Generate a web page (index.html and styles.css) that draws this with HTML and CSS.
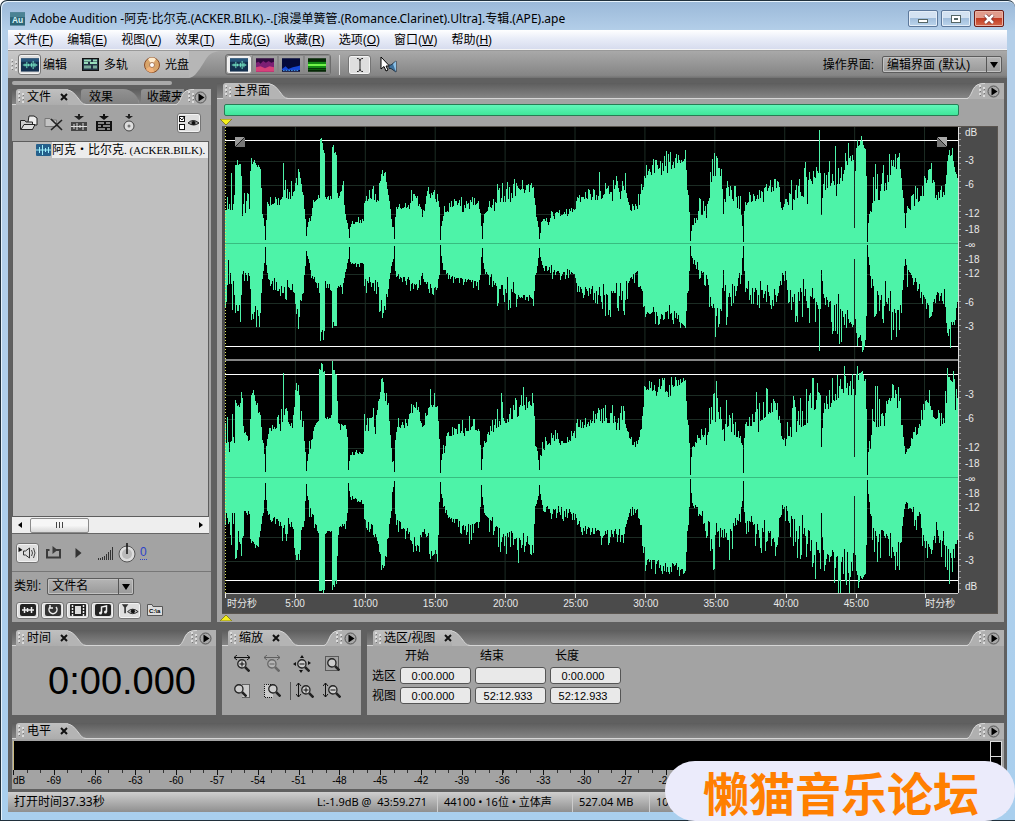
FILE: index.html
```html
<!DOCTYPE html>
<html lang="zh-CN">
<head>
    <meta charset="UTF-8">
    <meta name="viewport" content="width=device-width, initial-scale=1.0">
    <title>Adobe Audition</title>
    <link rel="stylesheet" href="styles.css">
</head>
<body>
    <!-- shared icon shapes -->
    <svg class="symbols" aria-hidden="true">
        <symbol id="slope-right" viewBox="0 0 24 16"><path d="M0 0C10 0 12 4 16 9C19 13 20 15 24 16H0Z" fill="#b4b4b4"/><path d="M0 .5C10 .5 12 4 16 9C19 13 20 15 24 15.5" fill="none" stroke="#d6d6d6"/></symbol>
        <symbol id="slope-left" viewBox="0 0 18 16"><path d="M18 0C9 0 7 4 5 9C3 13 2 15 0 16H18Z" fill="#b0b0b0"/><path d="M18 .5C9 .5 7 4 5 9C3 13 2 15 0 15.5" fill="none" stroke="#dadada"/></symbol>
        <symbol id="grip" viewBox="0 0 6 12"><path d="M0 1h2M0 5h2M0 9h2M4 3h2M4 7h2M4 11h2" stroke="#dcdcdc" stroke-width="2"/><path d="M1 2.500h1M1 6.500h1M1 10.500h1M5 4.500h1M5 8.500h1" stroke="#777"/></symbol>
        <symbol id="panel-arrow" viewBox="0 0 13 13"><circle cx="6.500" cy="6.500" r="5.500" fill="#a8a8a8" stroke="#555"/><path d="M4.500 2.500L10.500 6.500L4.500 10.500Z" fill="#000"/></symbol>
        <symbol id="close-x" viewBox="0 0 8 8"><path d="M1 1L7 7M7 1L1 7" stroke="#111" stroke-width="2"/></symbol>
        <symbol id="wave" viewBox="0 0 20 15"><rect width="20" height="15" fill="#14304f"/><path d="M0 0H20V4H0Z" fill="#27557b"/><path d="M2 7.500H18M4.500 6V9M6.500 4V11M8.500 6V9M11.500 5V10M13.500 3V12M15.500 5V10M17.500 7V8" stroke="#7df5cf"/></symbol>
        <symbol id="lens" viewBox="0 0 12 12"><circle cx="4.500" cy="4.500" r="3.800" fill="#ccc" stroke="#222" stroke-width="1.200"/><path d="M7.500 7.500L11.500 11.500" stroke="#222" stroke-width="2.400"/></symbol>
    </svg>

    <div class="window">
        <header class="titlebar">
            <svg class="app-icon" viewBox="0 0 16 14"><rect width="16" height="14" fill="#2d6577"/><rect x="0" y="0" width="16" height="5" fill="#4b8394"/><text x="2" y="11" class="app-letters">Au</text></svg>
            <h1>Adobe Audition -阿克·比尔克.(ACKER.BILK).-.[浪漫单簧管.(Romance.Clarinet).Ultra].专辑.(APE).ape</h1>
            <div class="window-buttons">
                <button class="win-btn" aria-label="最小化"><svg viewBox="0 0 12 10"><rect x="1.500" y="5.500" width="9" height="3" fill="#fff" stroke="#566"/></svg></button>
                <button class="win-btn" aria-label="最大化"><svg viewBox="0 0 12 10"><rect x="1.500" y="1.500" width="9" height="7" fill="#fff" stroke="#566"/><rect x="4.500" y="4.500" width="3" height="1" fill="#9bc" stroke="#566"/></svg></button>
                <button class="win-btn win-close" aria-label="关闭"><svg viewBox="0 0 12 10"><path d="M2 1L10 9M10 1L2 9" stroke="#733" stroke-width="4"/><path d="M2 1L10 9M10 1L2 9" stroke="#fff" stroke-width="2.500"/></svg></button>
            </div>
        </header>

        <nav class="menubar">
            <button>文件(<u>F</u>)</button>
            <button>编辑(<u>E</u>)</button>
            <button>视图(<u>V</u>)</button>
            <button>效果(<u>T</u>)</button>
            <button>生成(<u>G</u>)</button>
            <button>收藏(<u>R</u>)</button>
            <button>选项(<u>O</u>)</button>
            <button>窗口(<u>W</u>)</button>
            <button>帮助(<u>H</u>)</button>
        </nav>

        <div class="toolbar">
            <div class="modes">
                <svg class="grip" viewBox="0 0 6 12"><use href="#grip"/></svg>
                <button class="mode"><span class="mode-icon pressed"><svg class="wave-icon" viewBox="0 0 20 15"><use href="#wave"/></svg></span>编辑</button>
                <button class="mode"><span class="mode-icon"><svg class="track-icon" viewBox="0 0 17 13"><rect x=".5" y=".5" width="16" height="12" fill="#234" stroke="#111"/><path d="M2 2.500H9M11 2.500H15M2 5H6M8 5H15" stroke="#9db" stroke-width="2"/><path d="M2 9H9M11 9H15" stroke="#7a9" stroke-width="3"/></svg></span>多轨</button>
                <button class="mode"><span class="mode-icon"><svg class="disc-icon" viewBox="0 0 16 16"><circle cx="8" cy="8" r="7.500" fill="#d9a56b" stroke="#8a4d28"/><path d="M8 8L4 2A7 7 0 0 1 12 2Z" fill="#ffeccd"/><path d="M8 8L2 12A7 7 0 0 0 10 15Z" fill="#f1b279"/><circle cx="8" cy="8" r="2.500" fill="#fff" stroke="#a75"/></svg></span>光盘</button>
            </div>
            <svg class="modes-edge" viewBox="0 0 32 27" preserveAspectRatio="none"><path d="M0 0H32C18 1 18 8 12 16C8 22 5 26 0 27Z" fill="#b6b6b6"/></svg>
            <div class="views">
                <button class="pressed" aria-label="波形"><svg class="wave-icon" viewBox="0 0 20 15"><use href="#wave"/></svg></button>
                <button aria-label="频谱"><svg class="wave-icon" viewBox="0 0 20 15"><rect width="20" height="15" fill="#30093f"/><path d="M0 15V5L3 4L5 6L8 3L11 5L14 3L17 5L20 4V15Z" fill="#7d1f74"/><path d="M0 10L5 9L10 11L15 9L20 10V15H0Z" fill="#d8427a"/></svg></button>
                <button aria-label="声像"><svg class="wave-icon" viewBox="0 0 20 15"><rect width="20" height="15" fill="#040a3c"/><path d="M0 12L4 9L7 12L12 10L17 9L20 8V13H0Z" fill="#1648d8"/><path d="M1 13.500H19" stroke="#4ca5ff" stroke-dasharray="2 1"/></svg></button>
                <button aria-label="相位"><svg class="wave-icon" viewBox="0 0 20 15"><rect width="20" height="15" fill="#052805"/><path d="M0 4H20V11H0Z" fill="#128a14"/><path d="M0 7.500H20" stroke="#7dff4f" stroke-width="2"/><path d="M0 12.500H20" stroke="#0d5f10"/></svg></button>
            </div>
            <div class="tools">
                <button class="pressed" aria-label="时间选择工具"><svg class="tool-icon" viewBox="0 0 14 16"><path d="M4 1.500C6 1.500 7 2 7 4V12C7 14 6 14.500 4 14.500M10 1.500C8 1.500 7 2 7 4M7 12C7 14 8 14.500 10 14.500" fill="none" stroke="#222"/></svg></button>
                <button aria-label="拖动工具"><svg class="scrub-icon" viewBox="0 0 18 16"><path d="M1 0V12L4 9.500L6 14L8 13L6 9H9.500Z" fill="#fff" stroke="#000"/><path d="M9 8H11L16 4V15L11 11.500H9Z" fill="#3e719b" stroke="#234"/><path d="M13 7L16 4V15Z" fill="#8dc1e6"/></svg></button>
            </div>
            <div class="workspace-picker">
                <label for="workspace">操作界面:</label>
                <span class="combo"><select id="workspace"><option>编辑界面 (默认)</option></select></span>
            </div>
        </div>

        <main class="workspace">
            <div class="row upper">
                <section class="panel files">
                    <div class="rail"></div>
                    <div class="tabs">
                        <button class="tab"><svg class="grip" viewBox="0 0 6 12"><use href="#grip"/></svg>文件<svg class="close" viewBox="0 0 8 8"><use href="#close-x"/></svg></button>
                        <svg class="slope" viewBox="0 0 24 16"><use href="#slope-right"/></svg>
                        <button class="tab dim">效果</button>
                        <button class="tab dim cut">收藏夹</button>
                        <div class="corner">
                            <svg class="slope-left" viewBox="0 0 18 16"><use href="#slope-left"/></svg>
                            <svg class="grip" viewBox="0 0 6 12"><use href="#grip"/></svg>
                            <button aria-label="面板菜单"><svg class="arrow" viewBox="0 0 13 13"><use href="#panel-arrow"/></svg></button>
                        </div>
                    </div>
                    <div class="panel-body">
                        <div class="file-tools">
                            <button aria-label="导入"><svg viewBox="0 0 20 18"><path d="M9 8L10 2H15L18 4V11H12Z" fill="#eee" stroke="#222"/><path d="M1.500 15.500V6.500H6L7 8H13.500V15.500Z" fill="#ccc" stroke="#222"/><path d="M2 15.500L5 10.500H16L13.500 15.500Z" fill="#ddd" stroke="#222"/></svg></button>
                            <button aria-label="关闭文件"><svg viewBox="0 0 20 18"><path d="M1 12.500V4.500H6L7 6H12.500V12.500Z" fill="#c4c4c4" stroke="#777"/><path d="M7 5L18 16M18 6L7 16" stroke="#222" stroke-width="1.600"/></svg></button>
                            <button aria-label="插入多轨"><svg viewBox="0 0 20 18"><path d="M9 0H11V2H15L10 6L5 2H9Z" fill="#222"/><rect x="2" y="8" width="16" height="9" fill="#444"/><path d="M2 12.500H18M5 10V15M8 9V16M11 11V14M14 9V16" stroke="#ddd"/></svg></button>
                            <button aria-label="编辑文件"><svg viewBox="0 0 20 18"><path d="M9 0H11V2H15L10 6L5 2H9Z" fill="#111"/><rect x="2" y="7" width="16" height="10" fill="#111"/><path d="M4 9H10M12 9H16M4 12H7M9 12H16M4 15H11M13 15H16" stroke="#aaa" stroke-width="1.500"/></svg></button>
                            <button aria-label="插入光盘"><svg viewBox="0 0 20 18"><path d="M9 0H11V2H14L10 5L6 2H9Z" fill="#222"/><circle cx="10" cy="12" r="5" fill="#ddd" stroke="#444"/><circle cx="10" cy="12" r="1.500" fill="#777"/></svg></button>
                            <button class="pressed options" aria-label="显示选项"><svg class="options-icon" viewBox="0 0 22 16"><rect x="1.500" y="1.500" width="5" height="5" fill="#fff" stroke="#111"/><path d="M2 3L4 5L7 1" fill="none" stroke="#111"/><rect x="1.500" y="9.500" width="5" height="5" fill="#fff" stroke="#111"/><path d="M10 8Q15 3 21 8Q16 12 10 8Z" fill="#999" stroke="#222"/><circle cx="15.500" cy="8" r="2" fill="#111"/></svg></button>
                        </div>
                        <div class="file-list">
                            <div class="file-row"><svg class="file-icon" viewBox="0 0 15 12"><rect width="15" height="12" rx="1" fill="#25608c"/><path d="M0 6H15M3.500 3V9M6.500 1V11M9.500 4V8M12.500 3V9" stroke="#9ceefa"/></svg><span class="file-name">阿克・比尔克<span class="latin">. (ACKER.BILK).</span></span></div>
                        </div>
                        <div class="hscroll">
                            <button aria-label="向左"><svg viewBox="0 0 8 8"><path d="M6 1L2 4L6 7Z"/></svg></button>
                            <span class="thumb"><i></i><i></i><i></i></span>
                            <button aria-label="向右"><svg viewBox="0 0 8 8"><path d="M2 1L6 4L2 7Z"/></svg></button>
                        </div>
                        <div class="preview">
                            <button class="pressed" aria-label="自动播放"><svg viewBox="0 0 20 16"><path d="M1 2L5 5L1 7Z" fill="#111"/><path d="M6 6H8L12 3V13L8 10H6Z" fill="#ddd" stroke="#333"/><path d="M14 5Q16 8 14 11M16 3Q19 8 16 13" fill="none" stroke="#444"/></svg></button>
                            <button aria-label="循环"><svg viewBox="0 0 20 16"><path d="M6 5H3.500V12.500H16.500V5H10" fill="none" stroke="#3b3b3b" stroke-width="2"/><path d="M9 1L14 5L9 9Z" fill="#3b3b3b"/></svg></button>
                            <button aria-label="播放"><svg viewBox="0 0 20 16"><path d="M7 3L13 8L7 13Z" fill="#333"/></svg></button>
                            <svg class="volume-bars" viewBox="0 0 16 14"><path d="M.5 12V14M2.500 12V14M4.500 11V14M6.500 10V14M8.500 8V14M10.500 6V14M12.500 4V14M14.500 1V14" stroke="#333"/></svg>
                            <svg class="knob" viewBox="0 0 18 20"><circle cx="9" cy="11" r="8" fill="#ddd" stroke="#555"/><circle cx="9" cy="11" r="5" fill="#bbb"/><path d="M9 0V11" stroke="#111" stroke-width="1.500"/></svg>
                            <a href="#volume" id="volume">0</a>
                        </div>
                        <div class="category">
                            <label for="category">类别:</label>
                            <span class="combo"><select id="category"><option>文件名</option></select></span>
                        </div>
                        <div class="filters">
                            <button class="pressed" aria-label="音频文件"><svg viewBox="0 0 18 14"><rect x="1" y="1" width="16" height="12" rx="2" fill="#222"/><path d="M3 7H15M5.500 4V10M8.500 5V9M12.500 4V10" stroke="#eee" stroke-width="1.500"/></svg></button>
                            <button class="pressed" aria-label="循环文件"><svg viewBox="0 0 18 14"><rect x="1" y="1" width="16" height="12" rx="2" fill="#333"/><path d="M6 4A4 4 0 1 0 12 4M6 2V5H9" fill="none" stroke="#eee" stroke-width="1.500"/></svg></button>
                            <button class="pressed" aria-label="视频文件"><svg viewBox="0 0 18 14"><rect x="1" y="1" width="16" height="12" rx="1" fill="#222"/><rect x="6" y="3" width="6" height="8" fill="#ddd"/><path d="M3.500 2V13M14.500 2V13" stroke="#eee" stroke-width="1.500" stroke-dasharray="2 1"/></svg></button>
                            <button class="pressed" aria-label="MIDI 文件"><svg viewBox="0 0 18 14"><rect x="1" y="1" width="16" height="12" rx="2" fill="#222"/><path d="M7.500 10V4L12.500 3V9" fill="none" stroke="#eee" stroke-width="1.500"/><circle cx="6.500" cy="10" r="1.500" fill="#eee"/><circle cx="11.500" cy="9" r="1.500" fill="#eee"/></svg></button>
                            <button class="pressed eye" aria-label="标记"><svg viewBox="0 0 22 16"><path d="M1 1H9L6 5V12H4V5Z" fill="#333"/><path d="M8 10Q14 4 21 10Q14 15 8 10Z" fill="#bbb" stroke="#111"/><circle cx="14.500" cy="9.500" r="2.500" fill="#111"/></svg></button>
                            <button aria-label="完整路径"><svg viewBox="0 0 18 14"><path d="M1.500 12.500V1.500H6L7 3.500H16.500V12.500Z" fill="#ddd" stroke="#555"/><text x="3" y="10" class="tiny">C:\a</text></svg></button>
                        </div>
                    </div>
                </section>

                <section class="panel main-view">
                    <div class="tabs">
                        <button class="tab"><svg class="grip" viewBox="0 0 6 12"><use href="#grip"/></svg>主界面</button>
                        <svg class="slope" viewBox="0 0 24 16"><use href="#slope-right"/></svg>
                        <div class="corner">
                            <svg class="slope-left" viewBox="0 0 18 16"><use href="#slope-left"/></svg>
                            <svg class="grip" viewBox="0 0 6 12"><use href="#grip"/></svg>
                            <button aria-label="面板菜单"><svg class="arrow" viewBox="0 0 13 13"><use href="#panel-arrow"/></svg></button>
                        </div>
                    </div>
                    <div class="panel-body">
                        <div class="range-bar"></div>
                        <svg class="marker" viewBox="0 0 12 7"><path d="M0 0H12L6 6Z" fill="#f5ef1c" stroke="#8a8420"/></svg>
                        <div class="display">
                            <div class="wave-area">
                                <div class="channel" id="left"></div>
                                <div class="channel" id="right"></div>
                                <span class="fade fade-in"></span>
                                <span class="fade fade-out"></span>
                            </div>
                            <div class="db-scale">
                                <ol class="db-rows"><li>dB</li><li>-3</li><li>-6</li><li>-12</li><li>-18</li><li>-∞</li><li>-18</li><li>-12</li><li>-6</li><li>-3</li></ol>
                                <ol class="db-rows lower"><li></li><li>-3</li><li>-6</li><li>-12</li><li>-18</li><li>-∞</li><li>-18</li><li>-12</li><li>-6</li><li>-3</li><li>dB</li></ol>
                            </div>
                            <ol class="time-ruler">
                                <li class="unit">时分秒</li><li>5:00</li><li>10:00</li><li>15:00</li><li>20:00</li><li>25:00</li><li>30:00</li><li>35:00</li><li>40:00</li><li>45:00</li><li class="unit end">时分秒</li>
                            </ol>
                        </div>
                        <svg class="marker" viewBox="0 0 12 7"><path d="M0 7H12L6 1Z" fill="#f5ef1c" stroke="#8a8420"/></svg>
                    </div>
                </section>
            </div>

            <div class="row lower-row">
                <section class="panel time">
                    <div class="tabs">
                        <button class="tab"><svg class="grip" viewBox="0 0 6 12"><use href="#grip"/></svg>时间<svg class="close" viewBox="0 0 8 8"><use href="#close-x"/></svg></button>
                        <svg class="slope" viewBox="0 0 24 16"><use href="#slope-right"/></svg>
                        <div class="corner">
                            <svg class="slope-left" viewBox="0 0 18 16"><use href="#slope-left"/></svg>
                            <svg class="grip" viewBox="0 0 6 12"><use href="#grip"/></svg>
                            <button aria-label="面板菜单"><svg class="arrow" viewBox="0 0 13 13"><use href="#panel-arrow"/></svg></button>
                        </div>
                    </div>
                    <div class="panel-body"><output>0:00.000</output></div>
                </section>

                <section class="panel zoom">
                    <div class="tabs">
                        <button class="tab"><svg class="grip" viewBox="0 0 6 12"><use href="#grip"/></svg>缩放<svg class="close" viewBox="0 0 8 8"><use href="#close-x"/></svg></button>
                        <svg class="slope" viewBox="0 0 24 16"><use href="#slope-right"/></svg>
                        <div class="corner">
                            <svg class="slope-left" viewBox="0 0 18 16"><use href="#slope-left"/></svg>
                            <svg class="grip" viewBox="0 0 6 12"><use href="#grip"/></svg>
                            <button aria-label="面板菜单"><svg class="arrow" viewBox="0 0 13 13"><use href="#panel-arrow"/></svg></button>
                        </div>
                    </div>
                    <div class="panel-body">
                        <button aria-label="水平放大"><svg viewBox="0 0 18 18"><path d="M1 2.500H17M4 0L1 2.500L4 5M14 0L17 2.500L14 5" fill="none" stroke="#111"/><use href="#lens" x="4" y="4" width="13" height="13"/><path d="M6.500 9H11.500M9 6.500V11.500" stroke="#111"/></svg></button>
                        <button class="off" aria-label="水平缩小"><svg viewBox="0 0 18 18"><path d="M1 2.500H17M4 0L1 2.500L4 5M14 0L17 2.500L14 5" fill="none" stroke="#111"/><use href="#lens" x="4" y="4" width="13" height="13"/><path d="M6.500 9H11.500" stroke="#111"/></svg></button>
                        <button aria-label="全部缩小"><svg viewBox="0 0 18 18"><use href="#lens" x="4" y="4" width="13" height="13"/><path d="M6.500 9H11.500" stroke="#111"/><path d="M9 0L11 3H7ZM0 9L3 7V11ZM18 8L15 6V10ZM8 18L6 15H10Z" fill="#111"/></svg></button>
                        <button aria-label="缩放到选区"><svg viewBox="0 0 18 18"><rect x="2.500" y="1.500" width="13" height="14" fill="none" stroke="#111" stroke-dasharray="1 1"/><use href="#lens" x="4" y="3" width="13" height="13"/></svg></button>
                        <button aria-label="缩放到左边缘"><svg viewBox="0 0 18 18"><path d="M9.500 2.500H16.500V15.500H9.500" fill="#ccc" stroke="#111" stroke-dasharray="1 1"/><use href="#lens" x="1" y="2" width="13" height="13"/></svg></button>
                        <button aria-label="缩放到右边缘"><svg viewBox="0 0 18 18"><path d="M10 2.500H1.500V15.500H10" fill="#ccc" stroke="#111" stroke-dasharray="1 1"/><use href="#lens" x="5" y="2" width="13" height="13"/></svg></button>
                        <button class="divided" aria-label="垂直放大"><svg viewBox="0 0 18 18"><path d="M2.500 1V15M0 4L2.500 1L5 4M0 12L2.500 15L5 12" fill="none" stroke="#111"/><use href="#lens" x="5" y="3" width="13" height="13"/><path d="M7.500 8H12.500M10 5.500V10.500" stroke="#111"/></svg></button>
                        <button aria-label="垂直缩小"><svg viewBox="0 0 18 18"><path d="M2.500 1V15M0 4L2.500 1L5 4M0 12L2.500 15L5 12" fill="none" stroke="#111"/><use href="#lens" x="5" y="3" width="13" height="13"/><path d="M7.500 8H12.500" stroke="#111"/></svg></button>
                    </div>
                </section>

                <section class="panel selection">
                    <div class="tabs">
                        <button class="tab"><svg class="grip" viewBox="0 0 6 12"><use href="#grip"/></svg>选区/视图<svg class="close" viewBox="0 0 8 8"><use href="#close-x"/></svg></button>
                        <svg class="slope" viewBox="0 0 24 16"><use href="#slope-right"/></svg>
                        <div class="corner">
                            <svg class="slope-left" viewBox="0 0 18 16"><use href="#slope-left"/></svg>
                            <svg class="grip" viewBox="0 0 6 12"><use href="#grip"/></svg>
                            <button aria-label="面板菜单"><svg class="arrow" viewBox="0 0 13 13"><use href="#panel-arrow"/></svg></button>
                        </div>
                    </div>
                    <div class="panel-body">
                        <span></span><span class="col" id="c1">开始</span><span class="col" id="c2">结束</span><span class="col" id="c3">长度</span>
                        <span id="r1">选区</span><input aria-labelledby="r1 c1" value="0:00.000"><input aria-labelledby="r1 c2" value=""><input aria-labelledby="r1 c3" value="0:00.000">
                        <span id="r2">视图</span><input aria-labelledby="r2 c1" value="0:00.000"><input aria-labelledby="r2 c2" value="52:12.933"><input aria-labelledby="r2 c3" value="52:12.933">
                    </div>
                </section>
            </div>

            <section class="panel levels">
                <div class="tabs">
                    <button class="tab"><svg class="grip" viewBox="0 0 6 12"><use href="#grip"/></svg>电平<svg class="close" viewBox="0 0 8 8"><use href="#close-x"/></svg></button>
                    <svg class="slope" viewBox="0 0 24 16"><use href="#slope-right"/></svg>
                    <div class="corner">
                        <svg class="slope-left" viewBox="0 0 18 16"><use href="#slope-left"/></svg>
                        <svg class="grip" viewBox="0 0 6 12"><use href="#grip"/></svg>
                        <button aria-label="面板菜单"><svg class="arrow" viewBox="0 0 13 13"><use href="#panel-arrow"/></svg></button>
                    </div>
                </div>
                <div class="panel-body">
                    <div class="meter"><span class="clip"></span></div>
                    <ol class="meter-scale" id="meterScale"></ol>
                </div>
            </section>
        </main>

        <footer class="statusbar">
            <span class="message">打开时间37.33秒</span>
            <span class="stat peak">L:-1.9dB @&nbsp; 43:59.271</span>
            <span class="stat format">44100 • 16位 • 立体声</span>
            <span class="stat size">527.04 MB</span>
            <span class="stat free">10</span>
        </footer>
    </div>
    <div class="forum-badge">懒猫音乐论坛</div>

    <script src="script.js"></script>
</body>
</html>
```
FILE: styles.css
```css
* {
    box-sizing: border-box;
}
body {
    margin: 0;
    font-family: "Liberation Sans", "Noto Sans CJK SC", sans-serif;
    font-size: 12px;
    line-height: 16px;
    color: #000;
    overflow: hidden;
}
button {
    margin: 0;
    padding: 0;
    border: 0;
    background: none;
    font: inherit;
    color: inherit;
}
ol {
    margin: 0;
    padding: 0;
    list-style: none;
}
svg {
    display: block;
    flex: none;
}
.symbols {
    position: absolute;
    width: 0;
    height: 0;
}
.window {
    display: flex;
    flex-direction: column;
    height: 100vh;
    padding: 0 8px 8px 7px;
    border: 1px solid #20303c;
    border-width: 1px 0 1px 1px;
    border-radius: 7px 7px 0 0;
    background: linear-gradient(#9ab8d8, #b4cfe9 30px, #b4cfe9 120px, #a9cfee);
    box-shadow: inset 1px 1px 0 #e7f3fc;
}

/* title and menu */
.titlebar {
    display: flex;
    align-items: center;
    height: 29px;
    padding: 6px 3px 0 2px;
    gap: 5px;
}
.app-icon {
    width: 15px;
    height: 14px;
}
.app-letters {
    font: bold 9px "Liberation Sans", sans-serif;
    fill: #d8f4f8;
}
.titlebar h1 {
    flex: 1;
    margin: 0;
    font: 12px/18px "Noto Sans", "Noto Sans CJK SC", sans-serif;
    white-space: nowrap;
}
.window-buttons {
    display: flex;
    gap: 3px;
}
.win-btn {
    display: flex;
    align-items: center;
    justify-content: center;
    width: 30px;
    height: 17px;
    border: 1px solid #5c789b;
    border-radius: 2px;
    background: linear-gradient(#d3e2f2 45%, #a1bedc 50%, #bcd5ec);
    box-shadow: inset 0 0 0 1px #e4eef8;
}
.win-btn svg {
    width: 12px;
    height: 10px;
}
.win-close {
    border-color: #6e1d18;
    background: linear-gradient(#e19b8b 45%, #c23b22 50%, #d4694c);
    box-shadow: inset 0 0 0 1px #eab3a5;
}
.menubar {
    display: flex;
    gap: 14px;
    height: 20px;
    padding: 0 6px;
    background: linear-gradient(#fff, #e9edf8 45%, #d7dcee);
    border-bottom: 1px solid #f4f4f4;
}

/* toolbar */
.toolbar {
    display: flex;
    align-items: center;
    height: 28px;
    background: linear-gradient(#a9a9a9, #858585 90%, #707070);
    border-top: 1px solid #999;
}
.modes {
    display: flex;
    align-items: center;
    align-self: stretch;
    gap: 12px;
    padding-left: 3px;
    background: linear-gradient(#c8c8c8, #b0b0b0);
}
.modes > .grip {
    margin-right: -11px;
}
.modes-edge {
    width: 32px;
    height: 27px;
    margin-right: -1px;
}
.mode {
    display: flex;
    align-items: center;
    gap: 2px;
}
.mode-icon {
    display: flex;
    align-items: center;
    justify-content: center;
    width: 23px;
    height: 21px;
}
.pressed {
    border: 1px solid #757575;
    border-radius: 3px;
    background: #dedede;
    box-shadow: inset 0 0 0 1px #f3f3f3;
}
.wave-icon {
    width: 18px;
    height: 14px;
}
.track-icon {
    width: 17px;
    height: 13px;
}
.disc-icon {
    width: 16px;
    height: 16px;
}
.grip {
    width: 6px;
    height: 12px;
}
.views {
    display: flex;
    margin-left: 5px;
    border: 1px solid #6c6c6c;
    border-radius: 3px;
}
.views button {
    display: flex;
    align-items: center;
    justify-content: center;
    width: 26px;
    height: 19px;
    border: 1px solid #888;
}
.views .pressed {
    background: #eee;
}
.tools {
    display: flex;
    gap: 6px;
    margin-left: 8px;
    padding-left: 8px;
    border-left: 1px solid #ddd;
}
.tools button {
    display: flex;
    align-items: center;
    justify-content: center;
    width: 23px;
    height: 20px;
}
.tool-icon {
    width: 14px;
    height: 16px;
}
.scrub-icon {
    width: 18px;
    height: 16px;
}
.workspace-picker {
    display: flex;
    align-items: center;
    gap: 8px;
    margin-left: auto;
    padding-right: 5px;
}
.combo {
    position: relative;
    display: flex;
}
.combo::after {
    content: "";
    position: absolute;
    right: 4px;
    top: 6px;
    border: 4px solid transparent;
    border-top: 6px solid #000;
    border-bottom: 0;
    pointer-events: none;
}
.combo::before {
    content: "";
    position: absolute;
    right: 15px;
    top: 1px;
    bottom: 1px;
    border-left: 1px solid #555;
}
.combo select {
    appearance: none;
    width: 120px;
    height: 17px;
    padding: 0 4px;
    border: 1px solid #5c5c5c;
    border-radius: 2px;
    background: linear-gradient(#b5b5b5, #999);
    box-shadow: inset 0 0 0 1px #c2c2c2;
    font: inherit;
    line-height: 14px;
    color: #000;
}

/* panels */
.workspace {
    display: flex;
    flex: 1;
    flex-direction: column;
    gap: 8px;
    min-height: 0;
    padding: 3px 3px 3px 4px;
    background: #606060;
}
.row {
    display: flex;
    gap: 6px;
}
.upper {
    flex: 1;
    min-height: 0;
}
.panel {
    display: flex;
    flex-direction: column;
    min-width: 0;
}
.tabs {
    display: flex;
    flex: none;
    height: 16px;
    padding-left: 4px;
    background: linear-gradient(#5d5d5d, #888);
    box-shadow: inset 0 -1px 0 #d5d5d5;
    overflow: hidden;
}
.main-view .tabs,
.zoom .tabs,
.selection .tabs {
    padding-left: 6px;
}
.tab {
    position: relative;
    z-index: 1;
    display: flex;
    flex: none;
    align-items: center;
    gap: 3px;
    padding-left: 2px;
    border-radius: 3px 0 0 0;
    background: linear-gradient(#c0c0c0, #acacac);
    white-space: nowrap;
}
.close {
    width: 8px;
    height: 8px;
    margin-left: 6px;
}
.slope {
    width: 24px;
    height: 16px;
    margin-left: -6px;
}
.corner {
    position: relative;
    z-index: 2;
    display: flex;
    flex: none;
    align-items: center;
    gap: 2px;
    margin-left: auto;
    padding-right: 4px;
    background: linear-gradient(90deg, transparent 18px, #b0b0b0 18px);
}
.slope-left {
    width: 18px;
    height: 16px;
}
.corner .grip {
    margin-left: -8px;
}
.arrow {
    width: 13px;
    height: 13px;
}
.panel-body {
    flex: 1;
    min-height: 0;
    background: #a3a3a3;
}

/* file panel */
.files {
    width: 199px;
}
.rail {
    width: 160px;
    height: 4px;
    margin: 0 0 4px;
    border-radius: 2px;
    background: #a9a9a9;
}
.files .slope {
    margin-right: -5px;
    position: relative;
    z-index: 1;
}
.files .close {
    position: relative;
    z-index: 2;
}
.files .tab:first-child {
    z-index: 2;
}
.dim {
    z-index: 0;
    width: 58px;
    padding-left: 8px;
    border-radius: 3px 16px 0 0;
    background: linear-gradient(#929292, #7f7f7f);
    box-shadow: inset 0 -1px 0 #d5d5d5;
}
.cut {
    flex: 1;
    width: 30px;
    min-width: 0;
    margin: 0 -8px 0 2px;
    padding-left: 6px;
    border-radius: 3px 0 0 0;
    overflow: hidden;
}
.files .corner {
    gap: 0;
}
.files .corner .grip {
    margin-left: -6px;
}
.files .panel-body {
    display: flex;
    flex-direction: column;
}
.file-tools {
    display: flex;
    align-items: center;
    gap: 5px;
    height: 36px;
    padding: 0 10px 0 7px;
}
.file-tools svg {
    width: 20px;
    height: 18px;
}
.file-tools .options {
    margin-left: auto;
    padding: 1px 0;
}
.file-tools .options-icon {
    width: 22px;
    height: 16px;
}
.file-list {
    flex: 1;
    margin-right: 2px;
    border: 1px solid #5d5d5d;
    background: #bfbfbf;
}
.file-row {
    display: flex;
    align-items: center;
    padding-left: 23px;
    gap: 1px;
}
.file-name {
    flex: 1;
    min-width: 0;
    background: #ececec;
    font-family: "Liberation Serif", "Noto Sans CJK SC", serif;
    white-space: nowrap;
}
.latin {
    font-size: 11px;
}
.file-icon {
    width: 15px;
    height: 12px;
}
.hscroll {
    display: flex;
    align-items: center;
    height: 17px;
    margin-right: 2px;
    padding: 0 4px;
    border-bottom: 1px solid #666;
    background: #eee;
}
.hscroll button:last-child {
    margin-left: auto;
}
.hscroll svg {
    width: 8px;
    height: 8px;
}
.thumb {
    display: flex;
    align-items: center;
    justify-content: center;
    gap: 2px;
    width: 59px;
    height: 15px;
    margin-left: 6px;
    border: 1px solid #8b8b8b;
    border-radius: 2px;
    background: linear-gradient(#f6f6f6 50%, #d7d7d7);
}
.thumb i {
    width: 1px;
    height: 6px;
    background: #444;
}
.preview {
    display: flex;
    align-items: center;
    gap: 4px;
    height: 38px;
    padding-left: 4px;
    border-bottom: 1px solid #777;
}
.preview button {
    padding: 1px 0;
}
.preview button svg {
    width: 21px;
    height: 16px;
}
.volume-bars {
    width: 16px;
    height: 14px;
    margin-left: 5px;
}
.knob {
    width: 18px;
    height: 20px;
}
.preview a {
    color: #2c42c8;
    text-decoration: none;
    border-bottom: 1px dotted #2c42c8;
    line-height: 14px;
}
.category {
    display: flex;
    align-items: center;
    gap: 6px;
    height: 28px;
    padding-left: 2px;
}
.category select {
    width: 87px;
}
.filters {
    display: flex;
    align-items: center;
    gap: 2px;
    height: 20px;
    margin-bottom: 2px;
    padding-left: 4px;
}
.filters button {
    display: flex;
    align-items: center;
    justify-content: center;
    width: 23px;
    height: 17px;
}
.filters svg {
    width: 18px;
    height: 14px;
}
.filters .eye {
    margin-left: 2px;
}
.tiny {
    font: bold 6px "Liberation Sans", sans-serif;
}

/* waveform */
.main-view {
    flex: 1;
    padding-top: 2px;
}
.main-view .panel-body {
    display: flex;
    flex-direction: column;
    padding: 5px 6px 1px 5px;
}
.range-bar {
    flex: none;
    height: 12px;
    margin: 0 39px 3px 2px;
    border: 1px solid #277c54;
    border-radius: 2px;
    background: linear-gradient(#62f7ba, #3fe69a);
}
.marker {
    width: 12px;
    height: 7px;
    margin-left: -2px;
}
.display {
    display: grid;
    flex: 1;
    grid-template-columns: 1fr 39px;
    grid-template-rows: 1fr 20px;
    min-height: 0;
    padding-left: 3px;
    border: 1px solid #5a5550;
    border-left: 0;
    background: #4b4b4b;
}
.wave-area {
    position: relative;
    display: grid;
    grid-template-rows: 1fr 1fr;
    gap: 2px;
    min-height: 0;
    background: #858585;
}
.channel {
    min-height: 0;
    background: #000;
    overflow: hidden;
}
.channel svg {
    width: 100%;
    height: 100%;
}
.fade {
    position: absolute;
    top: 10px;
    width: 10px;
    height: 10px;
    background: linear-gradient(135deg, #999 45%, #222 50%, #777 55%);
}
.fade-in {
    left: 10px;
}
.fade-out {
    right: 11px;
    background: linear-gradient(45deg, #777 45%, #222 50%, #aaa 55%);
}
.db-scale {
    display: grid;
    grid-template-rows: 1fr 1fr;
    gap: 2px;
    min-height: 0;
    border-left: 1px solid #ddd;
}
.db-rows {
    display: grid;
    grid-template-rows: 28fr 24fr 29fr 16fr 15fr 15fr 14fr 29fr 24fr 38fr;
    min-height: 0;
    padding-left: 6px;
    background: repeating-linear-gradient(#999 0 1px, transparent 1px 6px) 0 0 / 2px 100% no-repeat;
    font-size: 10px;
    line-height: 12px;
    color: #e8e8e8;
}
.db-rows.lower {
    grid-template-rows: 28fr 24fr 29fr 16fr 15fr 15fr 14fr 29fr 24fr 26fr 12fr;
}
.db-rows li {
    min-height: 0;
}
.time-ruler {
    display: flex;
    border-top: 1px solid #ccc;
    font-size: 10px;
    line-height: 12px;
    color: #e8e8e8;
}
.time-ruler li {
    width: 9.57%;
    text-align: center;
}
.time-ruler li::before {
    content: "";
    display: block;
    width: 1px;
    height: 4px;
    margin: 0 auto;
    background: #eee;
}
.time-ruler .unit {
    width: 4.78%;
    padding-left: 2px;
    text-align: left;
    white-space: nowrap;
}
.time-ruler .unit::before {
    margin: 0 0 0 -2px;
}
.time-ruler .end {
    flex: 1;
    padding-left: 34px;
}
.time-ruler .end::before {
    margin: 0;
}

/* time, zoom, selection */
.lower-row .panel-body {
    flex: none;
    height: 69px;
}
.time {
    width: 204px;
}
.time .panel-body {
    display: flex;
    align-items: center;
    justify-content: flex-end;
    padding-right: 20px;
    font-size: 38px;
}
.zoom {
    width: 139px;
}
.zoom .panel-body {
    display: grid;
    grid-template-columns: repeat(4, 30px);
    align-content: start;
    justify-items: center;
    gap: 9px 0;
    padding: 9px 5px 0;
}
.zoom .panel-body svg {
    width: 18px;
    height: 18px;
}
.off {
    opacity: 0.45;
}
.divided {
    padding-left: 5px;
    border-left: 1px solid #555;
}
.selection {
    flex: 1;
}
.selection .panel-body {
    display: grid;
    grid-template-columns: repeat(4, max-content);
    grid-template-rows: 16px 17px 17px;
    align-items: center;
    gap: 3px 4px;
    padding: 2px 5px;
}
.selection .col {
    padding-left: 5px;
}
.selection input {
    width: 71px;
    height: 17px;
    padding: 0 5px 0 0;
    border: 1px solid #555;
    border-radius: 3px;
    background: #e9e9e9;
    font: 11px "Liberation Sans", sans-serif;
    text-align: center;
    color: #000;
}

/* levels */
.levels .panel-body {
    padding: 2px 2px 0 1px;
}
.meter {
    display: flex;
    justify-content: flex-end;
    height: 29px;
    border-left: 1px solid #c9b97e;
    background: #000;
}
.clip {
    width: 12px;
    border: 1px solid #ddd;
    background: linear-gradient(#000 14px, #ddd 14px 15px, #000 15px);
}
.meter-scale {
    display: flex;
    height: 19px;
    margin-right: 10px;
    padding-top: 5px;
    background:
        repeating-linear-gradient(90deg, #111 0 1px, transparent 1px calc(100% / 24)) 0 0 / 100% 5px no-repeat,
        repeating-linear-gradient(90deg, #333 0 1px, transparent 1px calc(100% / 72)) 0 0 / 100% 3px no-repeat;
    font-size: 10px;
    line-height: 12px;
}
.meter-scale li {
    flex: 2 1 0;
    text-align: center;
}
.meter-scale li:first-child {
    flex: 1 1 0;
    text-align: left;
}
.meter-scale li:last-child {
    flex: 1 1 0;
}

/* status */
.statusbar {
    display: flex;
    height: 20px;
    background: linear-gradient(#cfcfcf, #8f8f8f);
    font: 11px/20px "Noto Sans", "Noto Sans CJK SC", sans-serif;
}
.message {
    flex: 1;
    padding-left: 6px;
    font-size: 12px;
    white-space: nowrap;
}
.stat {
    padding-left: 6px;
    border-left: 1px solid #ccc;
    white-space: nowrap;
}
.peak {
    width: 126px;
    border-left: 0;
}
.format {
    width: 135px;
}
.size {
    width: 77px;
}
.free {
    width: 358px;
}
.forum-badge {
    position: absolute;
    z-index: 3;
    right: 0;
    bottom: 0;
    height: 60px;
    padding: 0 36px 0 38px;
    border-radius: 30px;
    background: #ebebfb;
    font: bold 46px/60px "Noto Sans CJK SC", sans-serif;
    color: #ff7f00;
}
```
FILE: script.js
```js
// x, top peak, top body, bottom peak, bottom body
const leftEnvelope = [
    [0,80,33,78,30],[9,60,33,60,30],[10,90,78,90,68],[15,88,78,86,68],[17,50,27,40,28],[24,50,34,38,30],
    [26,92,80,88,70],[35,80,74,84,66],[37,38,28,38,30],[40,5,3,6,3],[43,45,36,46,36],[53,55,42,54,40],[57,60,44,58,42],[58,84,80,60,42],[59,64,44,58,42],
    [68,62,44,56,40],[71,82,65,102,68],[74,80,60,80,62],[77,50,42,52,40],[81,7,5,8,5],[85,32,20,32,20],[88,44,40,38,32],
    [94,50,45,52,44],[95,108,94,108,86],[99,104,90,95,84],[100,50,44,46,40],[106,48,42,50,44],[107,100,88,90,82],[111,92,86,90,80],[112,50,44,55,44],
    [118,60,43,52,40],[121,26,22,28,20],[124,5,3,5,3],[126,24,19,23,20],[138,26,20,26,20],[139,50,40,46,36],[148,58,42,58,40],
    [153,50,40,55,44],[155,68,58,80,62],[159,78,68,74,62],[163,52,44,48,40],[167,20,16,22,16],[169,4,3,5,3],[171,40,33,38,32],[180,42,34,42,34],
    [190,62,44,52,42],[197,30,26,38,32],[203,55,45,50,40],[212,55,44,56,42],[214,40,35,36,28],[215,4,2,4,2],[219,36,28,30,26],
    [228,45,35,42,34],[245,44,34,44,36],[252,48,40,48,38],[257,5,3,5,3],[260,38,30,34,28],[272,60,40,64,42],[285,62,40,72,42],
    [295,62,52,60,54],[308,60,54,62,54],[311,28,24,30,24],[314,5,4,5,4],[318,26,18,27,22],[331,34,25,38,27],[350,36,32,36,30],
    [352,52,44,52,42],[374,58,43,60,48],[375,78,70,62,48],[376,58,43,70,48],[401,76,52,75,48],[406,38,32,38,32],[413,48,30,40,28],[418,62,50,58,50],[421,78,68,76,68],
    [445,92,68,88,68],[461,96,84,98,84],[463,56,52,60,50],[466,3,1,3,1],[469,22,18,22,18],[475,46,24,44,26],[483,42,30,48,32],
    [487,78,60,82,60],[491,96,74,92,74],[497,80,70,80,64],[499,30,28,30,26],[502,82,42,90,50],[505,66,38,74,42],[515,48,33,48,34],
    [519,3,1,3,1],[521,45,38,48,40],[535,64,44,74,46],[553,68,54,68,52],[558,36,30,34,28],[567,72,42,76,42],[582,78,46,76,46],
    [594,84,70,82,60],[595,114,110,108,104],[596,84,70,80,60],[597,28,26,30,26],[599,66,52,62,50],[612,96,58,100,60],[618,88,60,95,66],[625,104,84,102,78],
    [629,100,80,104,82],[630,16,15,18,16],[632,104,94,104,90],[638,114,102,109,98],[641,95,85,102,94],[643,3,1,3,1],[646,44,24,36,24],[650,76,50,84,48],
    [662,76,52,74,46],[668,98,76,98,64],[675,94,72,94,68],[679,44,38,46,36],[681,18,14,18,14],[683,46,30,42,26],[695,60,42,56,40],
    [706,84,70,86,66],[712,50,40,62,48],[720,64,48,64,46],[724,110,88,112,82],[728,100,86,94,76],[733,76,60,70,58]
];
const rightEnvelope = [
    [0,62,34,52,35],[9,66,34,80,36],[10,90,74,80,62],[17,84,64,76,56],[19,44,34,40,34],[24,46,36,40,34],[26,92,80,82,62],[35,84,60,72,58],
    [37,42,34,42,34],[40,6,5,7,5],[43,52,42,44,36],[57,76,54,62,44],[58,108,104,70,50],[59,78,58,66,46],[67,56,48,50,44],[71,104,92,106,88],[74,92,72,90,70],[77,58,44,54,42],
    [81,8,6,9,6],[85,46,28,44,28],[90,62,52,54,44],[93,66,56,62,56],[94,116,110,116,114],[99,114,104,116,112],[100,60,56,58,54],[106,64,60,56,54],
    [107,116,110,116,108],[111,110,98,116,106],[113,76,54,64,50],[121,54,48,50,44],[123,8,6,8,6],[126,28,22,24,20],[138,26,22,28,24],
    [139,70,45,56,42],[150,66,48,62,50],[155,98,84,90,76],[156,116,94,100,86],[159,90,76,108,84],[163,76,66,66,54],[165,46,40,48,40],[167,20,16,18,14],
    [169,6,4,7,5],[171,58,48,52,42],[182,60,50,62,48],[186,82,68,74,62],[193,80,70,80,66],[197,50,46,56,48],[205,86,70,80,64],[212,80,70,84,76],
    [214,46,32,30,22],[215,5,4,6,5],[219,34,26,32,28],[222,48,40,44,38],[245,60,46,66,48],[253,56,46,54,44],[256,8,6,8,6],[260,44,34,46,38],
    [275,72,52,76,52],[276,86,64,92,60],[278,72,54,78,56],[287,72,54,70,54],[297,88,66,92,64],[308,90,68,78,66],[310,38,30,32,28],[314,9,7,10,8],[318,38,26,34,28],[330,48,30,44,32],
    [350,48,38,42,36],[352,58,48,54,46],[380,74,54,72,54],[401,72,52,64,50],[406,40,34,38,32],[413,48,28,40,32],[417,64,52,58,48],
    [421,98,86,96,82],[445,98,84,96,84],[461,100,97,99,94],[463,60,54,60,54],[466,3,1,3,1],[469,34,28,30,26],[475,56,36,48,32],[484,66,40,66,38],
    [487,96,58,84,56],[491,104,54,96,58],[497,64,42,62,48],[502,94,50,96,48],[510,64,42,64,42],[517,42,34,40,30],[519,5,4,5,4],[521,62,48,54,42],
    [535,92,56,72,48],[553,78,62,84,58],[558,46,34,34,28],[575,94,46,84,48],[580,94,50,90,50],[590,96,64,94,58],[595,106,84,116,74],[596,100,80,110,70],
    [597,32,30,38,34],[599,74,62,90,72],[612,112,76,112,74],[625,112,90,114,86],[629,112,88,112,84],[630,20,18,20,18],[632,112,98,112,98],[638,116,106,114,100],
    [641,100,90,100,90],[643,4,2,4,2],[646,52,28,48,28],[650,94,50,94,52],[660,72,50,76,52],[668,104,80,106,70],[675,98,74,90,64],[679,48,40,50,40],
    [681,26,22,28,24],[695,60,46,58,40],[704,92,78,86,66],[712,62,48,74,52],[720,76,54,80,54],[724,116,88,108,80],[733,94,70,74,60]
];

let seed = 17;
function random() {
    seed = (seed * 16807) % 2147483647;
    return seed / 2147483647;
}

function valueAt(points, x, column) {
    let i = 0;
    while (i < points.length - 2 && points[i + 1][0] <= x) i++;
    const a = points[i];
    const b = points[i + 1];
    let t = Math.min(1, (x - a[0]) / (b[0] - a[0]));
    // silence between two tracks has steep sides
    if (b[column] < a[column] * 0.35) t = t * t;
    else if (a[column] < b[column] * 0.35) t = 1 - Math.pow(1 - t, 2);
    return a[column] + (b[column] - a[column]) * t;
}

function level(points, x, peak, body) {
    const hi = valueAt(points, x, peak);
    const lo = valueAt(points, x, body);
    let r = Math.pow(random(), 2);
    const extra = random();
    if (extra > 0.95) r = 1.1;
    if (extra < 0.06) r = -0.3;
    return Math.min(116, lo + (hi - lo) * r);
}

function drawChannel(id, points) {
    const width = 734;
    const middle = 116;
    let bars = '';
    for (let x = 0; x < width; x++) {
        const up = level(points, x, 1, 2);
        const down = level(points, x, 3, 4);
        bars += `M${x} ${Math.round(middle - up)}h1V${Math.round(middle + down)}h-1z`;
    }
    let grid = '';
    for (let x = 70; x < width; x += 70) grid += `M${x + 0.5} 0V232`;
    [34, 58, 87, 147, 176, 200].forEach(y => grid += `M0 ${y + 0.5}H734`);
    document.getElementById(id).innerHTML = `
        <svg viewBox="0 0 734 232" preserveAspectRatio="none" shape-rendering="crispEdges">
            <path d="${grid}" stroke="#1c2c24"/>
            <path d="M0 13.5H734M0 219.5H734" stroke="#fff"/>
            <path d="${bars}" fill="#4df3a8"/>
            <path d="M0 116.5H734" stroke="#37bd80"/>
            <path d="M0.5 0V232" stroke="#e4e85a" stroke-dasharray="1 2"/>
        </svg>`;
}

function fillMeterScale() {
    const scale = document.getElementById('meterScale');
    for (let db = -72; db <= 0; db += 3) {
        const item = document.createElement('li');
        if (db === -72) item.textContent = 'dB';
        else if (db < -21) item.textContent = db;
        scale.appendChild(item);
    }
}

drawChannel('left', leftEnvelope);
drawChannel('right', rightEnvelope);
fillMeterScale();
```
